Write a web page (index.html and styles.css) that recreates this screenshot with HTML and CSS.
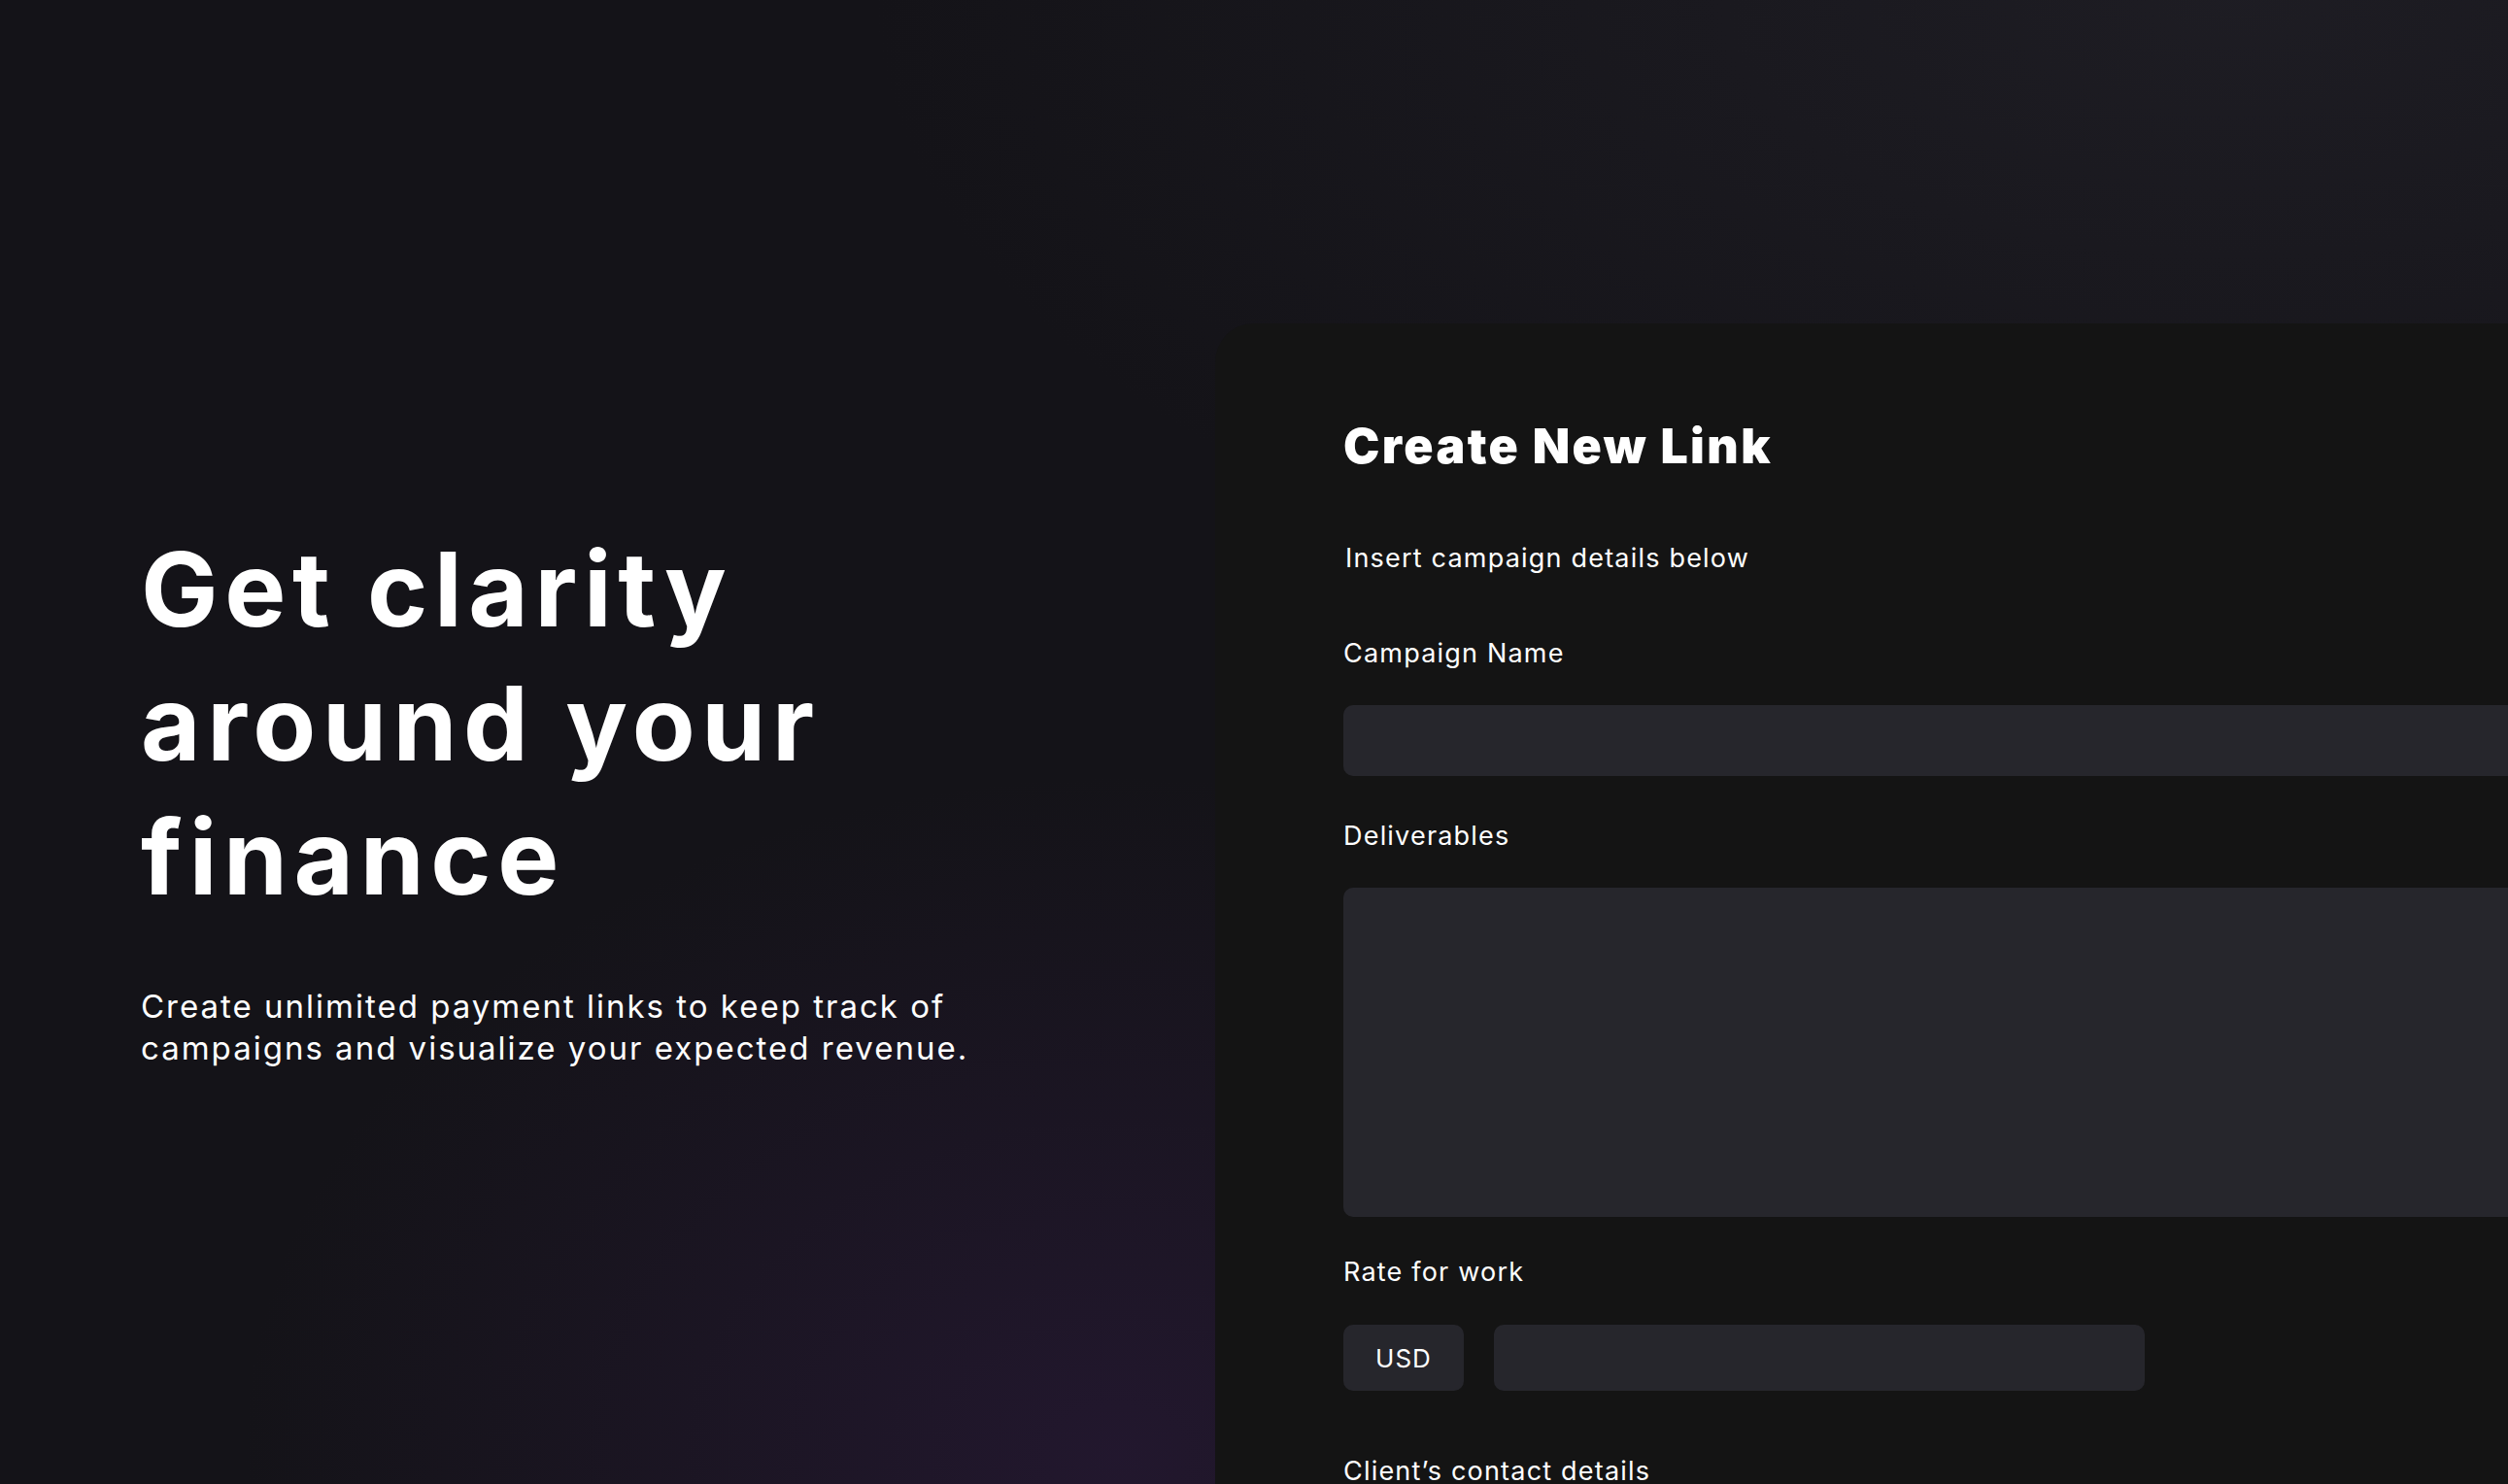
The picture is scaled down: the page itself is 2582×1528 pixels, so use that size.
FILE: index.html
```html
<!DOCTYPE html>
<html lang="en">
<head>
  <meta charset="UTF-8">
  <title>Create New Link</title>
  <link rel="stylesheet" href="styles.css">
</head>
<body>
  <main class="page">
    <section class="intro">
      <h1>Get clarity<br>around your<br>finance</h1>
      <p>Create unlimited payment links to keep track of campaigns and visualize your expected revenue.</p>
    </section>

    <section class="card">
      <h2>Create New Link</h2>
      <p class="hint">Insert campaign details below</p>

      <label class="field-label first" for="name">Campaign Name</label>
      <input class="field" id="name" type="text">

      <label class="field-label" for="deliverables">Deliverables</label>
      <textarea class="field area" id="deliverables"></textarea>

      <label class="field-label rate" for="rate">Rate for work</label>
      <div class="rate-row">
        <button class="currency">USD</button>
        <input class="field amount" id="rate" type="text">
      </div>

      <label class="field-label section" for="client">Client’s contact details</label>
    </section>
  </main>
</body>
</html>
```

FILE: styles.css
```css
html, body {
  margin: 0;
  padding: 0;
  height: 100%;
  overflow: hidden;
}
body {
  font-family: Inter, 'Noto Sans', sans-serif;
  color: #ffffff;
  background-color: #141318;
  background-image:
    radial-gradient(ellipse 900px 700px at 1150px 1500px, rgba(40, 25, 55, 0.7), rgba(40, 25, 55, 0) 100%),
    radial-gradient(ellipse 1400px 700px at 2300px 0px, rgba(32, 31, 38, 0.8), rgba(32, 31, 38, 0) 100%);
}
.page {
  display: flex;
  height: 100%;
}
.intro {
  width: 1106px;
  flex-shrink: 0;
  padding-left: 145px;
  padding-top: 538px;
}
.intro h1 {
  margin: 0;
  font-size: 106px;
  line-height: 138px;
  font-weight: 700;
  letter-spacing: 6.6px;
}
.intro p {
  margin: 63px 0 0;
  width: 900px;
  font-size: 33px;
  line-height: 43px;
  letter-spacing: 2px;
}
.card {
  flex: 1;
  margin-top: 333px;
  background-color: #141414;
  border-radius: 40px 0 0 0;
  padding: 96px 0 0 132px;
}
.card h2 {
  margin: 0;
  font-size: 50px;
  line-height: 60px;
  font-weight: 900;
  letter-spacing: 2.4px;
}
.hint {
  margin: 70px 0 0 2px;
  font-size: 27px;
  line-height: 32px;
  letter-spacing: 1.2px;
}
.field-label {
  display: block;
  margin-top: 46px;
  font-size: 27px;
  line-height: 32px;
  letter-spacing: 1.2px;
}
.field-label.first {
  margin-top: 66px;
}
.field-label.rate {
  margin-top: 41px;
}
.field-label.section {
  margin-top: 67px;
}
.field {
  display: block;
  box-sizing: border-box;
  margin-top: 37px;
  width: 1300px;
  height: 73px;
  border: none;
  border-radius: 10px;
  background-color: #26262c;
  color: #ffffff;
  font: inherit;
  outline: none;
}
.area {
  height: 339px;
  resize: none;
}
.rate-row {
  display: flex;
  gap: 31px;
  margin-top: 38px;
}
.rate-row .field {
  margin-top: 0;
  height: 68px;
}
.currency {
  width: 124px;
  height: 68px;
  border: none;
  border-radius: 10px;
  background-color: #26262c;
  color: #ffffff;
  font-family: inherit;
  font-size: 26px;
  letter-spacing: 1px;
}
.amount {
  width: 670px;
}
```
